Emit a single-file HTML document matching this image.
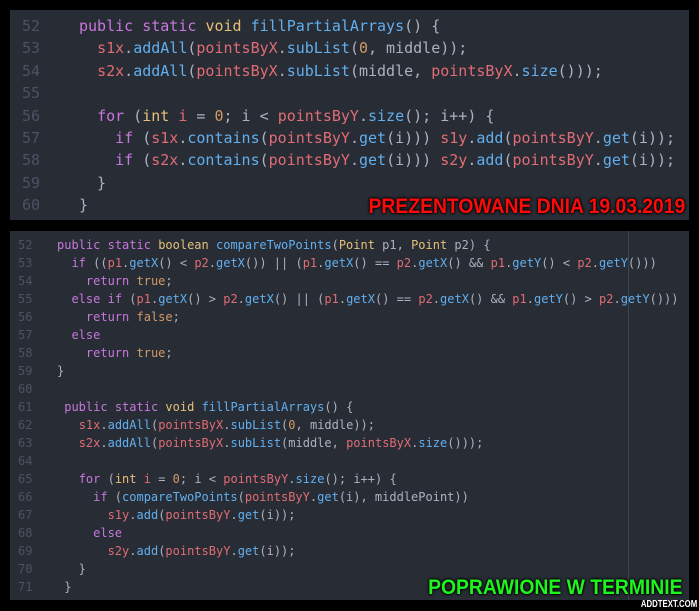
<!DOCTYPE html>
<html><head><meta charset="utf-8"><style>
body{margin:0;width:699px;height:611px;background:#000;position:relative;overflow:hidden}
.pan{position:absolute;left:10px;width:679px;background:#282c34;overflow:hidden}
pre{margin:0;position:absolute;font-family:"DejaVu Sans Mono","Liberation Mono",monospace;color:#abb2bf;white-space:pre}
.ln{color:#4b5263}
.k{color:#c678dd}.t{color:#e5c07b}.f{color:#61afef}.v{color:#e06c75}.n{color:#d19a66}
.top pre{font-size:15px;line-height:22.4px}
.bot pre{font-size:12px;line-height:18px}
.lbl{position:absolute;font-family:"Liberation Sans","DejaVu Sans",sans-serif;font-weight:bold;white-space:nowrap;line-height:1}
</style></head><body>
<div class="pan top" style="top:10px;height:210px">
<pre class="ln" style="left:12px;top:5px">52
53
54
55
56
57
58
59
60</pre>
<pre style="left:69px;top:5px"><span class="k">public</span> <span class="k">static</span> <span class="t">void</span> <span class="f">fillPartialArrays</span>() {
  <span class="v">s1x</span>.<span class="f">addAll</span>(<span class="v">pointsByX</span>.<span class="f">subList</span>(<span class="n">0</span>, middle));
  <span class="v">s2x</span>.<span class="f">addAll</span>(<span class="v">pointsByX</span>.<span class="f">subList</span>(middle, <span class="v">pointsByX</span>.<span class="f">size</span>()));

  <span class="k">for</span> (<span class="t">int</span> <span class="v">i</span> = <span class="n">0</span>; i &lt; <span class="v">pointsByY</span>.<span class="f">size</span>(); i++) {
    <span class="k">if</span> (<span class="v">s1x</span>.<span class="f">contains</span>(<span class="v">pointsByY</span>.<span class="f">get</span>(i))) <span class="v">s1y</span>.<span class="f">add</span>(<span class="v">pointsByY</span>.<span class="f">get</span>(i));
    <span class="k">if</span> (<span class="v">s2x</span>.<span class="f">contains</span>(<span class="v">pointsByY</span>.<span class="f">get</span>(i))) <span class="v">s2y</span>.<span class="f">add</span>(<span class="v">pointsByY</span>.<span class="f">get</span>(i));
  }
}</pre>
</div>
<div class="pan bot" style="top:231px;height:369px">
<div style="position:absolute;left:618px;top:0;width:1px;height:369px;background:#3e4451"></div>
<pre class="ln" style="left:8px;top:5px">52
53
54
55
56
57
58
59
60
61
62
63
64
65
66
67
68
69
70
71</pre>
<pre style="left:47px;top:5px"><span class="k">public</span> <span class="k">static</span> <span class="t">boolean</span> <span class="f">compareTwoPoints</span>(<span class="t">Point</span> p1, <span class="t">Point</span> p2) {
  <span class="k">if</span> ((<span class="v">p1</span>.<span class="f">getX</span>() &lt; <span class="v">p2</span>.<span class="f">getX</span>()) || (<span class="v">p1</span>.<span class="f">getX</span>() == <span class="v">p2</span>.<span class="f">getX</span>() &amp;&amp; <span class="v">p1</span>.<span class="f">getY</span>() &lt; <span class="v">p2</span>.<span class="f">getY</span>()))
    <span class="k">return</span> <span class="n">true</span>;
  <span class="k">else</span> <span class="k">if</span> (<span class="v">p1</span>.<span class="f">getX</span>() &gt; <span class="v">p2</span>.<span class="f">getX</span>() || (<span class="v">p1</span>.<span class="f">getX</span>() == <span class="v">p2</span>.<span class="f">getX</span>() &amp;&amp; <span class="v">p1</span>.<span class="f">getY</span>() &gt; <span class="v">p2</span>.<span class="f">getY</span>()))
    <span class="k">return</span> <span class="n">false</span>;
  <span class="k">else</span>
    <span class="k">return</span> <span class="n">true</span>;
}

 <span class="k">public</span> <span class="k">static</span> <span class="t">void</span> <span class="f">fillPartialArrays</span>() {
   <span class="v">s1x</span>.<span class="f">addAll</span>(<span class="v">pointsByX</span>.<span class="f">subList</span>(<span class="n">0</span>, middle));
   <span class="v">s2x</span>.<span class="f">addAll</span>(<span class="v">pointsByX</span>.<span class="f">subList</span>(middle, <span class="v">pointsByX</span>.<span class="f">size</span>()));

   <span class="k">for</span> (<span class="t">int</span> <span class="v">i</span> = <span class="n">0</span>; i &lt; <span class="v">pointsByY</span>.<span class="f">size</span>(); i++) {
     <span class="k">if</span> (<span class="f">compareTwoPoints</span>(<span class="v">pointsByY</span>.<span class="f">get</span>(i), middlePoint))
       <span class="v">s1y</span>.<span class="f">add</span>(<span class="v">pointsByY</span>.<span class="f">get</span>(i));
     <span class="k">else</span>
       <span class="v">s2y</span>.<span class="f">add</span>(<span class="v">pointsByY</span>.<span class="f">get</span>(i));
   }
 }</pre>
</div>
<div class="lbl" style="right:14px;top:196px;font-size:21px;color:#ff0a0a;text-shadow:0 0 3px #000,0 0 4px #000,0 0 2px #000;transform:scaleX(0.92);transform-origin:right">PREZENTOWANE DNIA 19.03.2019</div>
<div class="lbl" style="right:16px;top:577px;font-size:21px;color:#1ef51e;text-shadow:0 0 3px #000,0 0 4px #000,0 0 2px #000;transform:scaleX(0.92);transform-origin:right">POPRAWIONE W TERMINIE</div>
<div class="lbl" style="right:2px;top:600px;font-size:10px;color:#fff;transform:scaleX(0.78);transform-origin:right">ADDTEXT.COM</div>
</body></html>
